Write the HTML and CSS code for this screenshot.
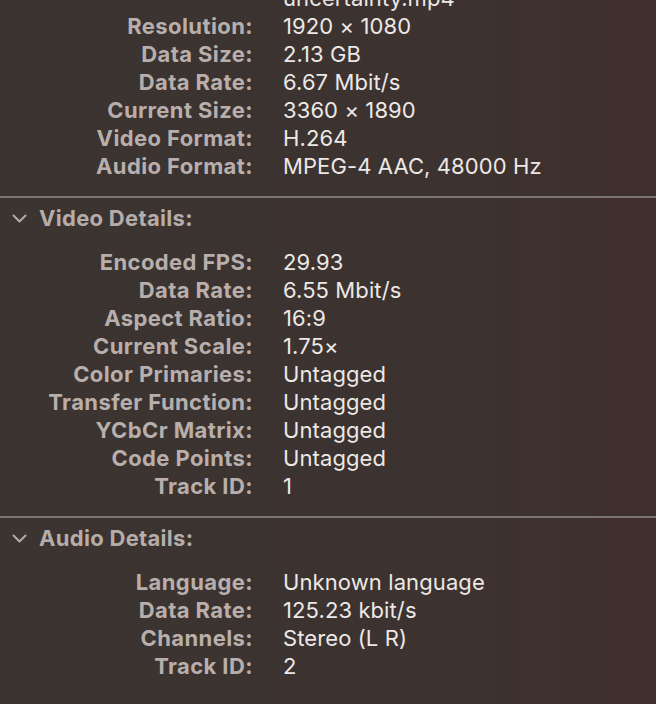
FILE: index.html
```html
<!DOCTYPE html>
<html>
<head>
<meta charset="utf-8">
<link rel="stylesheet" href="styles.css">
</head>
<body>
<div class="panel">
  <section class="section first">
    <dl class="rows">
      <dt></dt><dd>uncertainty.mp4</dd>
      <dt>Resolution:</dt><dd>1920 × 1080</dd>
      <dt>Data Size:</dt><dd>2.13 GB</dd>
      <dt>Data Rate:</dt><dd>6.67 Mbit/s</dd>
      <dt>Current Size:</dt><dd>3360 × 1890</dd>
      <dt>Video Format:</dt><dd>H.264</dd>
      <dt>Audio Format:</dt><dd>MPEG-4 AAC, 48000 Hz</dd>
    </dl>
  </section>
  <section class="section">
    <div class="header">
      <svg class="chev" width="15" height="9" viewBox="0 0 15 9"><path d="M1.5 1.5 L7.5 7.5 L13.5 1.5" fill="none" stroke="#b3aba8" stroke-width="2" stroke-linecap="round" stroke-linejoin="round"/></svg>
      <span>Video Details:</span>
    </div>
    <dl class="rows">
      <dt>Encoded FPS:</dt><dd>29.93</dd>
      <dt>Data Rate:</dt><dd>6.55 Mbit/s</dd>
      <dt>Aspect Ratio:</dt><dd>16:9</dd>
      <dt>Current Scale:</dt><dd>1.75×</dd>
      <dt>Color Primaries:</dt><dd>Untagged</dd>
      <dt>Transfer Function:</dt><dd>Untagged</dd>
      <dt>YCbCr Matrix:</dt><dd>Untagged</dd>
      <dt>Code Points:</dt><dd>Untagged</dd>
      <dt>Track ID:</dt><dd>1</dd>
    </dl>
  </section>
  <section class="section">
    <div class="header">
      <svg class="chev" width="15" height="9" viewBox="0 0 15 9"><path d="M1.5 1.5 L7.5 7.5 L13.5 1.5" fill="none" stroke="#b3aba8" stroke-width="2" stroke-linecap="round" stroke-linejoin="round"/></svg>
      <span>Audio Details:</span>
    </div>
    <dl class="rows">
      <dt>Language:</dt><dd>Unknown language</dd>
      <dt>Data Rate:</dt><dd>125.23 kbit/s</dd>
      <dt>Channels:</dt><dd>Stereo (L R)</dd>
      <dt>Track ID:</dt><dd>2</dd>
    </dl>
  </section>
</div>
</body>
</html>
```
FILE: styles.css
```css
html, body {
  margin: 0;
  padding: 0;
  height: 100%;
}
body {
  background: linear-gradient(to right, #3b3431 0%, #3c3330 60%, #3f2f2c 100%);
  font-family: Inter, "Noto Sans", "Liberation Sans", sans-serif;
  font-size: 22px;
  overflow: hidden;
}
.panel {
  display: flex;
  flex-direction: column;
}
.section {
  padding-bottom: 16px;
}
.section + .section {
  border-top: 2px solid #7a7674;
}
.section.first {
  margin-top: -16px;
}
.rows {
  display: grid;
  grid-template-columns: 253px 1fr;
  column-gap: 30px;
  margin: 0;
}
.rows dt, .rows dd {
  margin: 0;
  height: 28px;
  line-height: 28px;
  white-space: nowrap;
}
.rows dt {
  text-align: right;
  font-weight: 700;
  color: #b8afac;
  letter-spacing: 0.4px;
}
.rows dd {
  color: #ece8e6;
  font-weight: 400;
  letter-spacing: 0.1px;
}
.header {
  display: flex;
  align-items: center;
  height: 40px;
  padding-left: 12px;
  gap: 12px;
  margin-bottom: 10px;
  color: #b5adaa;
  font-weight: 700;
  letter-spacing: 0.3px;
}
.chev {
  display: block;
  margin-top: 1px;
}
```
